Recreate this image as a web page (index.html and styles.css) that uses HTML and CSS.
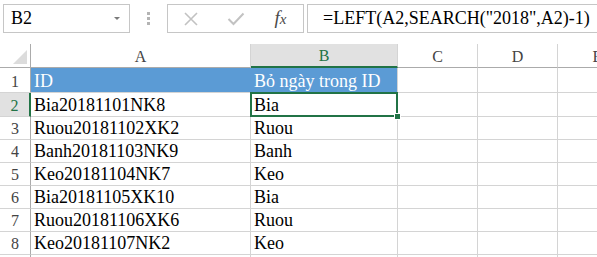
FILE: index.html
```html
<!DOCTYPE html>
<html lang="vi">

<head>
    <meta charset="UTF-8">
    <title>Excel - LEFT SEARCH</title>
    <link rel="stylesheet" href="styles.css">
</head>

<body>
    <div class="formula_bar">
        <div class="name_box">
            <span>B2</span>
            <span class="caret"></span>
        </div>
        <div class="grip"><i></i><i></i><i></i></div>
        <div class="fx_buttons">
            <span class="fx_btn">
                <svg width="16" height="16" viewBox="0 0 16 16">
                    <path d="M2 2 L14 14 M14 2 L2 14" stroke="#c2c2c2" stroke-width="1.6" fill="none"/>
                </svg>
            </span>
            <span class="fx_btn">
                <svg width="18" height="14" viewBox="0 0 18 14">
                    <path d="M1.5 7 L6.5 12 L16.5 1.5" stroke="#c2c2c2" stroke-width="2" fill="none"/>
                </svg>
            </span>
            <span class="fx_btn fx">f<span class="fx_x">x</span></span>
        </div>
        <div class="formula">=LEFT(A2,SEARCH("2018",A2)-1)</div>
    </div>

    <!-- luoi o: cot tieu de, A, B, C, D, E -->
    <div class="sheet">
        <div class="corner"><span class="tri"></span></div>
        <div class="col_head">A</div>
        <div class="col_head on">B</div>
        <div class="col_head">C</div>
        <div class="col_head">D</div>
        <div class="col_head">E</div>

        <div class="row_head">1</div>
        <div class="cell blue">ID</div>
        <div class="cell blue last">Bỏ ngày trong ID</div>
        <div class="cell"></div>
        <div class="cell"></div>
        <div class="cell"></div>

        <div class="row_head on">2</div>
        <div class="cell">Bia20181101NK8</div>
        <div class="cell sel">Bia</div>
        <div class="cell"></div>
        <div class="cell"></div>
        <div class="cell"></div>

        <div class="row_head">3</div>
        <div class="cell">Ruou20181102XK2</div>
        <div class="cell">Ruou</div>
        <div class="cell"></div>
        <div class="cell"></div>
        <div class="cell"></div>

        <div class="row_head">4</div>
        <div class="cell">Banh20181103NK9</div>
        <div class="cell">Banh</div>
        <div class="cell"></div>
        <div class="cell"></div>
        <div class="cell"></div>

        <div class="row_head">5</div>
        <div class="cell">Keo20181104NK7</div>
        <div class="cell">Keo</div>
        <div class="cell"></div>
        <div class="cell"></div>
        <div class="cell"></div>

        <div class="row_head">6</div>
        <div class="cell">Bia20181105XK10</div>
        <div class="cell">Bia</div>
        <div class="cell"></div>
        <div class="cell"></div>
        <div class="cell"></div>

        <div class="row_head">7</div>
        <div class="cell">Ruou20181106XK6</div>
        <div class="cell">Ruou</div>
        <div class="cell"></div>
        <div class="cell"></div>
        <div class="cell"></div>

        <div class="row_head">8</div>
        <div class="cell">Keo20181107NK2</div>
        <div class="cell">Keo</div>
        <div class="cell"></div>
        <div class="cell"></div>
        <div class="cell"></div>

        <div class="row_head"></div>
        <div class="cell"></div>
        <div class="cell"></div>
        <div class="cell"></div>
        <div class="cell"></div>
        <div class="cell"></div>
    </div>
</body>

</html>
```

FILE: styles.css
```css
body {
    margin: 0;
    width: 597px;
    height: 257px;
    overflow: hidden;
    background: #fff;
    font-family: "Liberation Serif", "Times New Roman", serif;
    color: #000;
}

/* thanh cong thuc */
.formula_bar {
    display: flex;
    height: 29px;
    padding: 4px 0 0 3px;
    margin-bottom: 11px;
}

.name_box {
    box-sizing: border-box;
    width: 127px;
    border: 1px solid #c6c6c6;
    display: flex;
    align-items: center;
    justify-content: space-between;
    padding: 0 9px 0 7px;
    font-family: "Liberation Serif", "Times New Roman", serif;
    font-size: 18px;
}

.caret {
    width: 0;
    height: 0;
    border-left: 3px solid transparent;
    border-right: 3px solid transparent;
    border-top: 3px solid #7a7a7a;
}

.grip {
    width: 37px;
    display: flex;
    flex-direction: column;
    align-items: center;
    justify-content: center;
    gap: 2px;
}

.grip i {
    width: 3px;
    height: 3px;
    background: #b4b4b4;
}

.fx_buttons {
    box-sizing: border-box;
    width: 137px;
    border: 1px solid #c6c6c6;
    display: grid;
    grid-template-columns: repeat(3, 1fr);
    align-items: center;
    justify-items: center;
}

.fx_btn {
    display: flex;
    align-items: center;
    justify-content: center;
}

.fx {
    font-style: italic;
    font-size: 19px;
    color: #4a4a4a;
    padding-bottom: 2px;
}

.fx_x {
    font-size: 15px;
    position: relative;
    top: 2px;
}

.formula {
    flex: 1;
    margin-left: 3px;
    margin-right: -20px;
    border: 1px solid #c6c6c6;
    padding-left: 15px;
    display: flex;
    align-items: center;
    font-size: 18px;
}

/* bang tinh */
.sheet {
    width: 638px;
    display: grid;
    grid-template-columns: 31px 220px 147px 80px 80px 80px;
    grid-template-rows: 24px 25px 24px repeat(6, 23px) 23px;
}

.sheet > div {
    box-sizing: border-box;
    border-right: 1px solid #d4d4d4;
    border-bottom: 1px solid #d4d4d4;
    display: flex;
    align-items: flex-end;
    white-space: nowrap;
    overflow: hidden;
}

.corner {
    position: relative;
    border-right-color: #ababab !important;
    border-bottom-color: #ababab !important;
}

.tri {
    position: absolute;
    right: 3px;
    bottom: 3px;
    width: 0;
    height: 0;
    border-left: 14px solid transparent;
    border-bottom: 14px solid #dcdcdc;
}

.col_head,
.row_head {
    justify-content: center;
    font-size: 16px;
    line-height: 20px;
    color: #444;
}

.col_head {
    border-bottom-color: #ababab !important;
}

.row_head {
    border-right-color: #ababab !important;
}

.col_head.on {
    background: #e1e1e1;
    color: #217346;
    border-bottom: 2px solid #217346 !important;
}

.row_head.on {
    background: #e1e1e1;
    color: #217346;
    border-right: 2px solid #217346 !important;
}

.cell {
    padding: 0 3px;
    font-size: 18px;
    line-height: 22px;
}

.blue {
    background: #5b9bd5;
    color: #fff;
    border-right-color: #5b9bd5 !important;
}

.blue.last {
    border-right-color: #d4d4d4 !important;
}

/* o dang chon B2 */
.sheet > .sel {
    overflow: visible;
    position: relative;
}

.sel::after {
    content: "";
    position: absolute;
    left: -1px;
    top: -1px;
    right: -1px;
    bottom: -1px;
    border: 2px solid #217346;
}

.sel::before {
    content: "";
    position: absolute;
    right: -4px;
    bottom: -4px;
    width: 5px;
    height: 5px;
    background: #217346;
    border: 1px solid #fff;
    z-index: 2;
}
```
